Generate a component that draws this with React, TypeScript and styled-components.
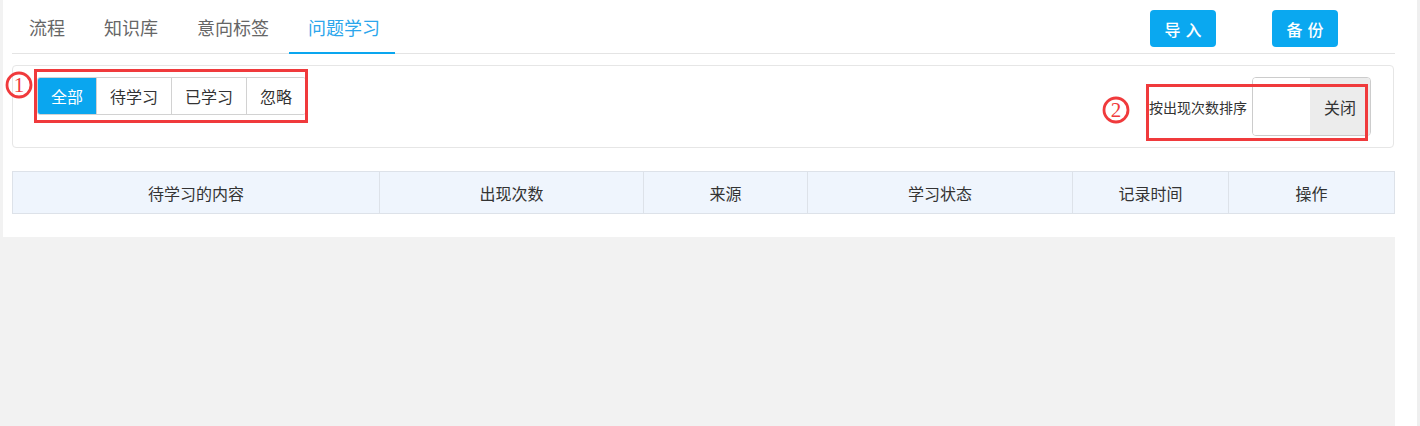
import React from "react";
import styled, { createGlobalStyle } from "styled-components";

const GlobalStyle = createGlobalStyle`
  html, body { margin: 0; padding: 0; background: #ffffff; }
  body { font-family: "Noto Sans CJK SC", "Noto Sans", sans-serif; }
  * { box-sizing: border-box; }
`;

const Shell = styled.div`
  position: relative;
  display: flex;
  width: 1420px;
  height: 426px;
  overflow: hidden;
`;

const Main = styled.div`
  width: 1395px;
  height: 100%;
  background: #f2f2f2;
  padding-left: 3px;
`;

const Gutter = styled.div`
  width: 22px;
  background: #ffffff;
`;

const Edge = styled.div`
  width: 3px;
  background: #efefef;
`;

const Panel = styled.div`
  background: #ffffff;
  height: 237px;
  padding-left: 9px;
`;

const HeaderRow = styled.div`
  display: flex;
  height: 54px;
  border-bottom: 1px solid #e4e4e4;
`;

const Tab = styled.div<{ $active?: boolean }>`
  position: relative;
  display: flex;
  align-items: center;
  height: 53px;
  padding: 0 19.5px;
  font-size: 18px;
  color: ${(p) => (p.$active ? "#2ba6ec" : "#666666")};
  cursor: pointer;
  &:first-child { padding-left: 17px; }
  &::after {
    content: "";
    display: ${(p) => (p.$active ? "block" : "none")};
    position: absolute;
    left: 0;
    right: 5px;
    bottom: -1px;
    height: 2px;
    background: #0aa6ef;
  }
`;

const Actions = styled.div`
  display: flex;
  gap: 56px;
  margin-left: auto;
  margin-top: 10px;
  padding-right: 57px;
  align-self: flex-start;
`;

const ActionButton = styled.button`
  display: flex;
  align-items: center;
  justify-content: center;
  width: 66px;
  height: 37px;
  padding: 0 0 0 5px;
  border: none;
  border-radius: 4px;
  background: #0aa8f0;
  color: #ffffff;
  font-family: inherit;
  font-size: 16px;
  font-weight: 500;
  letter-spacing: 5px;
`;

const FilterCard = styled.div`
  display: flex;
  justify-content: space-between;
  align-items: flex-start;
  margin-top: 11px;
  margin-right: 1px;
  height: 83px;
  padding: 11px 22px 0 24px;
  border: 1px solid #e6e6e6;
  border-radius: 4px;
`;

const Segmented = styled.div`
  display: flex;
  height: 38px;
  border: 1px solid #d2d2d2;
  border-radius: 3px;
  overflow: hidden;
`;

const Segment = styled.div<{ $active?: boolean }>`
  display: flex;
  align-items: center;
  padding: 0 13px;
  font-size: 16px;
  color: ${(p) => (p.$active ? "#ffffff" : "#333333")};
  background: ${(p) => (p.$active ? "#0aa6ef" : "#ffffff")};
  & + & { border-left: 1px solid #d2d2d2; }
`;

const SortControl = styled.div`
  display: flex;
  align-items: center;
  gap: 5px;
`;

const SortLabel = styled.span`
  font-size: 14px;
  color: #333333;
`;

const Switch = styled.div`
  display: flex;
  width: 119px;
  height: 59px;
  border: 1px solid #cccccc;
  border-radius: 4px;
  overflow: hidden;
`;

const SwitchBlank = styled.div`
  width: 57px;
  background: #ffffff;
`;

const SwitchOff = styled.div`
  flex: 1;
  display: flex;
  align-items: center;
  justify-content: center;
  background: #ececec;
  font-size: 16px;
  color: #333333;
`;

const Table = styled.table`
  margin-top: 23px;
  width: 1382px;
  border-collapse: collapse;
  table-layout: fixed;
`;

const Th = styled.th`
  height: 42px;
  padding: 0;
  border: 1px solid #dde2e9;
  background: #eff5fd;
  font-size: 16px;
  font-weight: normal;
  color: #333333;
  text-align: center;
`;

const Annotation = styled.div<{ $l: number; $t: number; $w: number; $h: number }>`
  position: absolute;
  left: ${(p) => p.$l}px;
  top: ${(p) => p.$t}px;
  width: ${(p) => p.$w}px;
  height: ${(p) => p.$h}px;
  border: 3px solid #f03a3c;
  pointer-events: none;
`;

const Marker = styled.svg<{ $l: number; $t: number }>`
  position: absolute;
  left: ${(p) => p.$l}px;
  top: ${(p) => p.$t}px;
`;

const CircledNumber: React.FC<{ n: string; l: number; t: number }> = ({ n, l, t }) => (
  <Marker $l={l} $t={t} width="28" height="28" viewBox="0 0 28 28">
    <circle cx="14" cy="14" r="12" fill="none" stroke="#f03a3c" strokeWidth="2.8" />
    <text
      x="14"
      y="21"
      textAnchor="middle"
      fontFamily="'Liberation Serif', serif"
      fontSize="21"
      fill="#f03a3c"
    >
      {n}
    </text>
  </Marker>
);

const tabs = ["流程", "知识库", "意向标签", "问题学习"];
const segments = ["全部", "待学习", "已学习", "忽略"];
const columns: { title: string; width: number }[] = [
  { title: "待学习的内容", width: 367 },
  { title: "出现次数", width: 264 },
  { title: "来源", width: 164 },
  { title: "学习状态", width: 265 },
  { title: "记录时间", width: 156 },
  { title: "操作", width: 166 },
];

export default function App() {
  return (
    <>
      <GlobalStyle />
      <Shell>
        <Main>
          <Panel>
            <HeaderRow>
              {tabs.map((t, i) => (
                <Tab key={t} $active={i === 3}>
                  {t}
                </Tab>
              ))}
              <Actions>
                <ActionButton>导入</ActionButton>
                <ActionButton>备份</ActionButton>
              </Actions>
            </HeaderRow>
            <FilterCard>
              <Segmented>
                {segments.map((s, i) => (
                  <Segment key={s} $active={i === 0}>
                    {s}
                  </Segment>
                ))}
              </Segmented>
              <SortControl>
                <SortLabel>按出现次数排序</SortLabel>
                <Switch>
                  <SwitchBlank />
                  <SwitchOff>关闭</SwitchOff>
                </Switch>
              </SortControl>
            </FilterCard>
            <Table>
              <colgroup>
                {columns.map((c) => (
                  <col key={c.title} style={{ width: c.width }} />
                ))}
              </colgroup>
              <thead>
                <tr>
                  {columns.map((c) => (
                    <Th key={c.title}>{c.title}</Th>
                  ))}
                </tr>
              </thead>
            </Table>
          </Panel>
        </Main>
        <Gutter />
        <Edge />
        <Annotation $l={34} $t={69} $w={274} $h={54} />
        <CircledNumber n="1" l={5} t={71} />
        <Annotation $l={1146} $t={84} $w={222} $h={57} />
        <CircledNumber n="2" l={1102} t={96} />
      </Shell>
    </>
  );
}
